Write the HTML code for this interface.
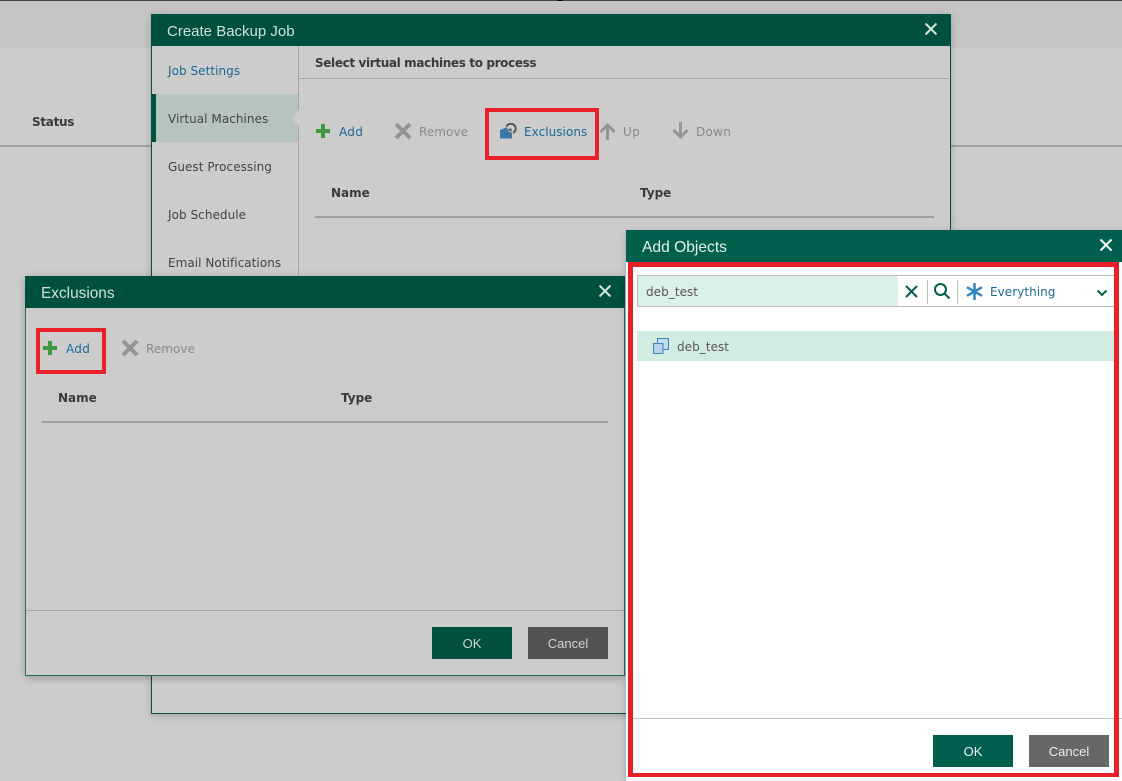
<!DOCTYPE html>
<html><head><meta charset="utf-8"><style>
html,body{margin:0;padding:0;background:#ccc;width:1122px;height:781px;overflow:hidden}
div,span,svg{position:absolute}
.t{font-family:"DejaVu Sans","Liberation Sans",sans-serif;font-size:12px;line-height:16px;white-space:nowrap;color:#444;letter-spacing:.05px}
.b{font-weight:bold;color:#3a3a3a;font-size:12px;letter-spacing:0}
.h{font-family:"Liberation Sans",sans-serif;font-size:15px;line-height:20px;color:#cfe0da;white-space:nowrap}
.l{color:#1a6a94}.g{color:#8a8a8a}
.btn{width:80px;height:32px;line-height:33px;text-align:center;font-family:"Liberation Sans",sans-serif;font-size:13px;color:#d4d4d4}
</style></head><body>
<div style="left:0;top:0;width:1122px;height:1px;background:#444"></div>
<div style="left:557px;top:0;width:6px;height:1px;background:#000"></div>
<div style="left:0;top:1px;width:1122px;height:47px;background:#c5c5c5"></div>
<div style="left:0;top:145px;width:1122px;height:2px;background:#a3a3a3"></div>
<div class="t b" style="left:32px;top:114px;letter-spacing:-.3px">Status</div>

<!-- Create Backup Job -->
<div style="left:151px;top:14px;width:798px;height:698px;background:#ccc;border:1px solid #00503f;box-shadow:0 2px 8px rgba(0,0,0,.2)"></div>
<div style="left:151px;top:14px;width:800px;height:32px;background:#00503f"></div>
<div class="h" style="left:167px;top:21px;line-height:21px">Create Backup Job</div>
<svg style="left:924px;top:22px" width="14" height="14"><path d="M1.500 1.500L12.500 12.500M12.500 1.500L1.500 12.500" stroke="#d5e2dd" stroke-width="2"/></svg>
<div style="left:298px;top:46px;width:1px;height:240px;background:#a6a6a6"></div>
<div style="left:299px;top:78px;width:650px;height:1px;background:#a6a6a6"></div>
<div style="left:152px;top:94px;width:146px;height:48px;background:#b5c5bd"></div>
<div style="left:152px;top:94px;width:4px;height:48px;background:#00503f"></div>
<svg style="left:290px;top:110px" width="9" height="16"><path d="M1 8L9 0V16Z" fill="#ccc"/></svg>
<div class="t l" style="left:168px;top:63px">Job Settings</div>
<div class="t" style="left:168px;top:111px">Virtual Machines</div>
<div class="t" style="left:168px;top:159px">Guest Processing</div>
<div class="t" style="left:168px;top:207px">Job Schedule</div>
<div class="t" style="left:168px;top:255px">Email Notifications</div>
<div class="t b" style="left:315px;top:55px;letter-spacing:-.36px">Select virtual machines to process</div>

<svg style="left:316px;top:124px" width="14" height="14"><path d="M7 0V14M0 7H14" stroke="#3f9a3f" stroke-width="4"/></svg>
<div class="t l" style="left:339px;top:124px;letter-spacing:.3px">Add</div>
<svg style="left:394px;top:122px" width="18" height="18"><path d="M2 2L16 16M16 2L2 16" stroke="#949494" stroke-width="4"/></svg>
<div class="t g" style="left:419px;top:124px">Remove</div>
<svg style="left:500px;top:123px" width="17" height="17"><path d="M0 7L7 4A6.500 6.500 0 0 0 12 10V15.500H0Z" fill="#3a78a6"/><path d="M6.500 3.500A4.800 4.800 0 1 1 13 9.800" fill="none" stroke="#555" stroke-width="2"/><path d="M7.500 6L11.500 5.500L11.500 9Z" fill="#555"/></svg>
<div class="t l" style="left:524px;top:124px">Exclusions</div>
<svg style="left:599px;top:123px" width="17" height="17"><path d="M8.500 17V2M1.500 9L8.500 2L15.500 9" fill="none" stroke="#959595" stroke-width="3"/></svg>
<div class="t g" style="left:623px;top:124px;letter-spacing:.4px">Up</div>
<svg style="left:672px;top:122px" width="17" height="17"><path d="M8.500 0V15M1.500 8L8.500 15L15.500 8" fill="none" stroke="#959595" stroke-width="3"/></svg>
<div class="t g" style="left:696px;top:124px;letter-spacing:.3px">Down</div>
<div class="t b" style="left:331px;top:185px">Name</div>
<div class="t b" style="left:640px;top:185px">Type</div>
<div style="left:315px;top:216px;width:619px;height:2px;background:#a0a0a0"></div>
<div style="left:485px;top:108px;width:106px;height:44px;border:4px solid #e8202a"></div>

<!-- Exclusions -->
<div style="left:25px;top:276px;width:598px;height:398px;background:#ccc;border:1px solid #1f6f5c;box-shadow:0 2px 8px rgba(0,0,0,.25)"></div>
<div style="left:25px;top:276px;width:600px;height:32px;background:#00503f"></div>
<div class="h" style="left:41px;top:283px;font-size:15.4px;line-height:21px">Exclusions</div>
<svg style="left:598px;top:284px" width="14" height="14"><path d="M1.500 1.500L12.500 12.500M12.500 1.500L1.500 12.500" stroke="#d5e2dd" stroke-width="2"/></svg>
<svg style="left:43px;top:341px" width="14" height="14"><path d="M7 0V14M0 7H14" stroke="#3f9a3f" stroke-width="4"/></svg>
<div class="t l" style="left:66px;top:341px;letter-spacing:.3px">Add</div>
<svg style="left:121px;top:339px" width="18" height="18"><path d="M2 2L16 16M16 2L2 16" stroke="#949494" stroke-width="4"/></svg>
<div class="t g" style="left:146px;top:341px">Remove</div>
<div class="t b" style="left:58px;top:390px">Name</div>
<div class="t b" style="left:341px;top:390px">Type</div>
<div style="left:42px;top:421px;width:566px;height:2px;background:#a0a0a0"></div>
<div style="left:26px;top:610px;width:598px;height:1px;background:#a6a6a6"></div>
<div class="btn" style="left:432px;top:627px;background:#00503f">OK</div>
<div class="btn" style="left:528px;top:627px;background:#525252">Cancel</div>
<div style="left:36px;top:328px;width:62px;height:38px;border:4px solid #e8202a"></div>

<!-- Add Objects -->
<div style="left:626px;top:230px;width:496px;height:551px;background:#fff;box-shadow:0 2px 8px rgba(0,0,0,.2)"></div>
<div style="left:626px;top:230px;width:496px;height:32px;background:#00604d"></div>
<div class="h" style="left:642px;top:237px;color:#e6f0ec;font-size:15.6px;line-height:21px">Add Objects</div>
<svg style="left:1099px;top:238px" width="14" height="14"><path d="M1.500 1.500L12.500 12.500M12.500 1.500L1.500 12.500" stroke="#fff" stroke-width="2"/></svg>
<div style="left:637px;top:275px;width:477px;height:30px;border-top:1px solid #bbb;border-bottom:1px solid #bbb"></div>
<div style="left:637px;top:275px;width:260px;height:30px;background:#ddf0e7;border:1px solid #bbb;border-right:0"></div>
<div class="t" style="left:646px;top:284px;color:#555">deb_test</div>
<svg style="left:905px;top:285px" width="13" height="13"><path d="M1 1L12 12M12 1L1 12" stroke="#00604d" stroke-width="2"/></svg>
<div style="left:927px;top:280px;width:1px;height:24px;background:#bbb"></div>
<svg style="left:933px;top:282px" width="18" height="18"><circle cx="7.500" cy="7.500" r="5.500" fill="none" stroke="#00604d" stroke-width="2"/><path d="M11.500 11.500L16.500 16.500" stroke="#00604d" stroke-width="2"/></svg>
<div style="left:957px;top:280px;width:1px;height:24px;background:#bbb"></div>
<svg style="left:966px;top:283px" width="17" height="17"><path d="M8.500 0V17M1 4.200L16 12.800M16 4.200L1 12.800" stroke="#2f86bd" stroke-width="2.500"/></svg>
<div class="t l" style="left:990px;top:284px">Everything</div>
<svg style="left:1096px;top:289px" width="12" height="9"><path d="M1.500 1.500L6 6L10.500 1.500" fill="none" stroke="#00604d" stroke-width="2"/></svg>
<div style="left:637px;top:331px;width:477px;height:30px;background:#d2ece1"></div>
<svg style="left:652px;top:338px" width="18" height="18"><rect x="5.500" y="0.500" width="11" height="11" fill="#c4dcec" stroke="#3d86bb"/><rect x="1.500" y="5.500" width="9.500" height="10" fill="#b6d4ea" stroke="#3d86bb"/></svg>
<div class="t" style="left:677px;top:339px;color:#555">deb_test</div>
<div style="left:628px;top:718px;width:494px;height:1px;background:#c4c4c4"></div>
<div class="btn" style="left:933px;top:735px;background:#00604d;color:#eef">OK</div>
<div class="btn" style="left:1029px;top:735px;background:#676767;color:#eee">Cancel</div>
<div style="left:628px;top:262px;width:481px;height:506px;border:5px solid #e8202a;border-bottom-width:4px"></div>
</body></html>
